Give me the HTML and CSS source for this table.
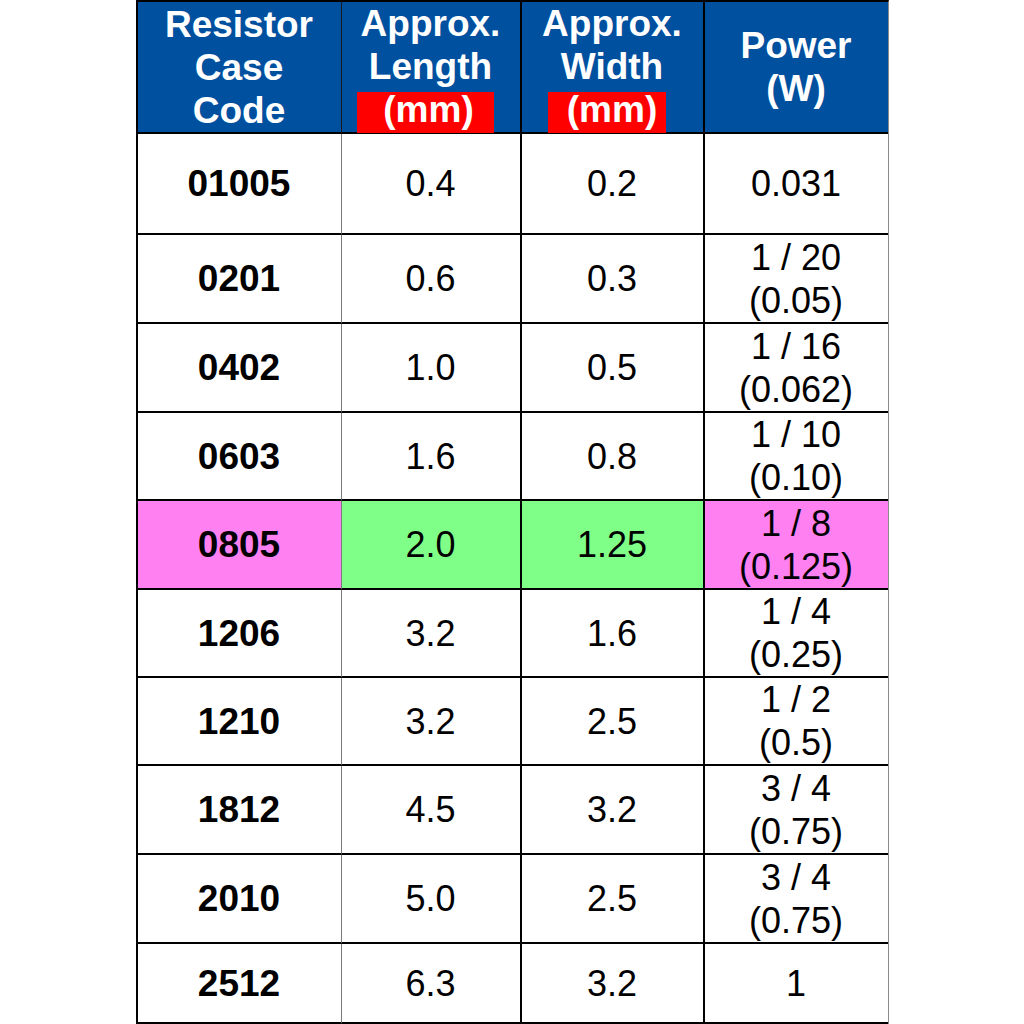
FILE: index.html
```html
<!DOCTYPE html>
<html lang="en">
<head>
<meta charset="utf-8">
<title>Resistor Case Codes</title>
<link rel="stylesheet" href="styles.css">
</head>
<body>
<div class="table">
  <div class="cell head c1"><span>Resistor</span><span>Case</span><span>Code</span></div>
  <div class="cell head c2"><span>Approx.</span><span>Length</span><span><span class="unit unit-len">(mm)</span></span></div>
  <div class="cell head c3"><span>Approx.</span><span>Width</span><span><span class="unit unit-wid">(mm)</span></span></div>
  <div class="cell head c4"><span>Power</span><span>(W)</span></div>

  <div class="cell c1 code">01005</div><div class="cell c2">0.4</div><div class="cell c3">0.2</div><div class="cell c4">0.031</div>
  <div class="cell c1 code">0201</div><div class="cell c2">0.6</div><div class="cell c3">0.3</div><div class="cell c4"><span>1 / 20</span><span>(0.05)</span></div>
  <div class="cell c1 code">0402</div><div class="cell c2">1.0</div><div class="cell c3">0.5</div><div class="cell c4"><span>1 / 16</span><span>(0.062)</span></div>
  <div class="cell c1 code">0603</div><div class="cell c2">1.6</div><div class="cell c3">0.8</div><div class="cell c4"><span>1 / 10</span><span>(0.10)</span></div>
  <div class="cell c1 code pink">0805</div><div class="cell c2 green">2.0</div><div class="cell c3 green">1.25</div><div class="cell c4 pink"><span>1 / 8</span><span>(0.125)</span></div>
  <div class="cell c1 code">1206</div><div class="cell c2">3.2</div><div class="cell c3">1.6</div><div class="cell c4"><span>1 / 4</span><span>(0.25)</span></div>
  <div class="cell c1 code">1210</div><div class="cell c2">3.2</div><div class="cell c3">2.5</div><div class="cell c4"><span>1 / 2</span><span>(0.5)</span></div>
  <div class="cell c1 code">1812</div><div class="cell c2">4.5</div><div class="cell c3">3.2</div><div class="cell c4"><span>3 / 4</span><span>(0.75)</span></div>
  <div class="cell c1 code">2010</div><div class="cell c2">5.0</div><div class="cell c3">2.5</div><div class="cell c4"><span>3 / 4</span><span>(0.75)</span></div>
  <div class="cell c1 code">2512</div><div class="cell c2">6.3</div><div class="cell c3">3.2</div><div class="cell c4">1</div>
</div>
</body>
</html>
```

FILE: styles.css
```css
* { box-sizing: border-box; }

html, body {
  margin: 0;
  padding: 0;
  background: #ffffff;
}

body {
  font-family: "Liberation Sans", Arial, sans-serif;
  color: #000000;
}

.table {
  width: 753px;
  margin: 0 auto;
  display: grid;
  grid-template-columns: 204px 180px 183px 183px;
  grid-template-rows: 132px 101px 89px 89px 88px 89px 88px 88px 89px 89px 80px;
  border-top: 2px solid #000000;
  border-left: 2px solid #000000;
  border-right: 1px solid #8a8a8a;
}

.cell {
  display: flex;
  flex-direction: column;
  align-items: center;
  justify-content: center;
  text-align: center;
  font-size: 36px;
  line-height: 43px;
  border-bottom: 2px solid #000000;
  background: #ffffff;
  white-space: nowrap;
}

.c1 { border-right: 1px solid #7a7a7a; }
.c2 { border-right: 2px solid #000000; }
.c3 { border-right: 2px solid #000000; }

.code {
  font-weight: bold;
  font-size: 37px;
}

.head {
  background: #0050a0;
  color: #ffffff;
  font-weight: bold;
  font-size: 37px;
}

.head.c1 { border-right: 1px solid #1a1a1a; }

.unit {
  display: inline-block;
  background: #ff0000;
  height: 41px;
  line-height: 35px;
  vertical-align: baseline;
}

.unit-len {
  padding: 0 20px 0 26px;
  margin-right: 10px;
}

.unit-wid {
  padding: 0 9px 0 19px;
  margin-right: 10px;
}

.pink { background: #ff80f0; }
.green { background: #80ff88; }
```
